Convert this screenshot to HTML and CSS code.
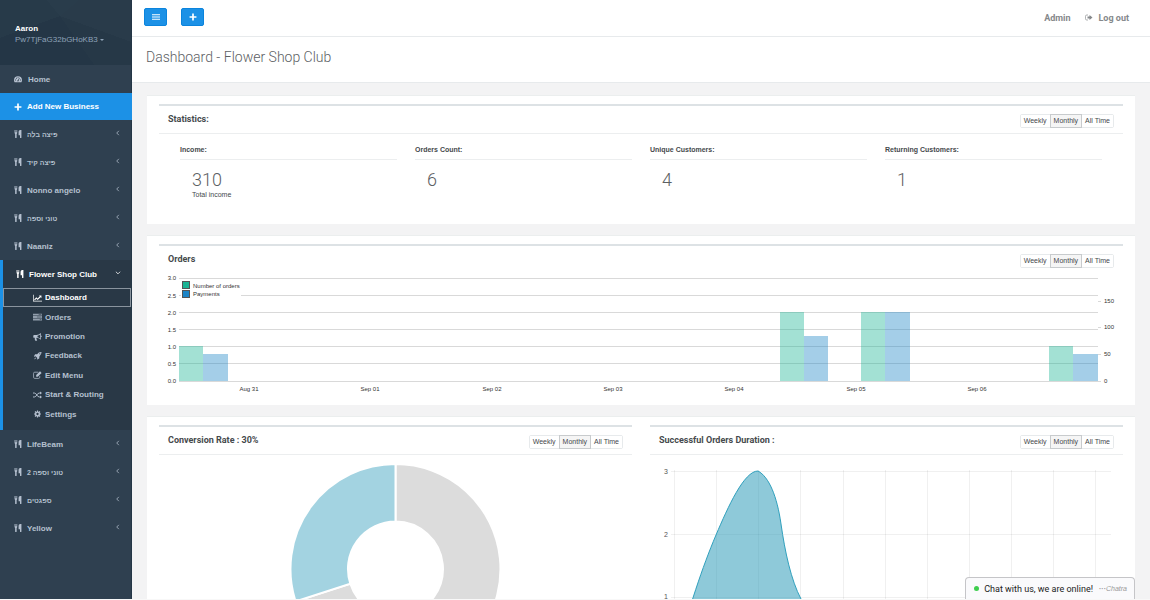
FILE: index.html
```html
<!DOCTYPE html>
<html lang="en">
<head>
    <meta charset="UTF-8">
    <meta name="viewport" content="width=device-width, initial-scale=1.0">
    <title>Dashboard - Flower Shop Club</title>
    <link rel="stylesheet" href="styles.css">
</head>
<body>
    <!-- Icon set -->
    <svg class="sprite" aria-hidden="true">
        <symbol id="i-food" viewBox="0 0 14 14"><path d="M1 0h1v4h.8V0h1v4h.8V0h1v5c0 1-.5 1.500-1 1.800V13q0 1-1.300 1T2 13V6.800C1.400 6.500 1 6 1 5zM13 0v13q0 1-1.300 1t-1.200-1V9H8V3q0-3 3-3z"/></symbol>
        <symbol id="i-home" viewBox="0 0 14 14"><path fill-rule="evenodd" d="M7 2a7 7 0 0 1 7 7q0 2-1 3.500H1Q0 11 0 9a7 7 0 0 1 7-7zM7 3.300v1.600M2 8h1.500v1.700H2zm1.500-3H5v1.700H3.500zM9 4.700l1 .5-1.800 4.200q.5 1.800-1.200 1.900-1.500-.3-1.200-1.800.5-.9 1.400-.8zM10.500 8H12v1.700h-1.500zM6.300 3.500h1.500V5H6.300z"/></symbol>
        <symbol id="i-plus" viewBox="0 0 14 14"><path d="M5.500 1h3v4.500H13v3H8.500V13h-3V8.500H1v-3h4.500z"/></symbol>
        <symbol id="i-bars" viewBox="0 0 14 14"><path d="M0 2h14v2H0zM0 6h14v2H0zM0 10h14v2H0z"/></symbol>
        <symbol id="i-left" viewBox="0 0 14 14"><path d="M9 2L4 7l5 5" fill="none" stroke="currentColor" stroke-width="1.800"/></symbol>
        <symbol id="i-down" viewBox="0 0 14 14"><path d="M2 4l5 5 5-5" fill="none" stroke="currentColor" stroke-width="1.800"/></symbol>
        <symbol id="i-chart" viewBox="0 0 16 14"><path d="M0 1h1.200v11H16v1.200H0zM2 9.500l4-4L8.200 7.700 12 4 10.500 2.500H15V7l-1.500-1.500-5.300 5.200L6 8.500 3.500 11z"/></symbol>
        <symbol id="i-list" viewBox="0 0 16 14"><path d="M0 1h16v3.200H0zM0 5.400h16v3.200H0zM0 9.800h16V13H0z" opacity=".75"/><path d="M10 2.600h5M7 7h8M12 11.400h3" stroke="#293846"/></symbol>
        <symbol id="i-horn" viewBox="0 0 16 14"><path fill-rule="evenodd" d="M14 0v4.500q1.500.5 1.500 1.500T14 7.500V12q-4-3.500-7.500-3.500-1.300 1 .2 2.200-.5 1 .8 2-1.500 1.500-3.700.5-1-2.500-.5-4.700H2Q.5 8.500.5 7V5Q.5 3.500 2 3.500h4.500Q10 3.500 14 0zm-1.200 2.500Q10.500 4.300 8 4.600v2.800q2.500.3 4.800 2.100z"/></symbol>
        <symbol id="i-rocket" viewBox="0 0 14 14"><path fill-rule="evenodd" d="M14 0q.2 4.500-3.700 7.700L10 11.200l-3.500 2-.5-.5.7-2.300-3-3-2.300.7-.6-.5 2-3.500 3.500-.3Q9.500-.2 14 0zm-3 2a1 1 0 1 0 .1 2 1 1 0 0 0-.1-2zM3 9.500l1.500 1.500L1 13z"/></symbol>
        <symbol id="i-edit" viewBox="0 0 16 14"><path d="M9.500 2H3Q1 2 1 4v7q0 2 2 2h7q2 0 2-2V9" fill="none" stroke="currentColor" stroke-width="1.300"/><path d="M12.500.5l2.800 2.800L8.500 10H5.700V7.200z"/></symbol>
        <symbol id="i-random" viewBox="0 0 16 14"><path d="M0 3.500h2.500C6.500 3.500 7 10.500 11 10.500h2M0 10.500h2.500C6.500 10.500 7 3.500 11 3.500h2" fill="none" stroke="currentColor" stroke-width="1.700"/><path d="M12.500.8L16 3.500l-3.500 2.700zM12.500 7.800l3.500 2.700-3.500 2.700z"/></symbol>
        <symbol id="i-cog" viewBox="0 0 16 16"><circle cx="8" cy="8" r="3.700" fill="none" stroke="currentColor" stroke-width="2.800"/><path d="M8 1v3M8 12v3M1 8h3M12 8h3M3 3l2 2M11 11l2 2M3 13l2-2M11 5l2-2" stroke="currentColor" stroke-width="2.300"/></symbol>
        <symbol id="i-out" viewBox="0 0 16 14"><path d="M6 2H3.500Q1 2 1 4.500v5Q1 12 3.500 12H6" fill="none" stroke="currentColor" stroke-width="1.300"/><path d="M9 2l6 5-6 5V9H5V5h4z"/></symbol>
    </svg>

    <div class="wrapper">
        <nav class="sidebar">
            <div class="profile">
                <strong>Aaron</strong>
                <a href="#">Pw7TjFaG32bGHoKB3 <span class="caret"></span></a>
            </div>
            <ul class="menu">
                <li><a href="#"><svg class="icon"><use href="#i-home"/></svg><span class="home">Home</span></a></li>
                <li class="add"><a href="#"><svg class="icon"><use href="#i-plus"/></svg>Add New Business</a></li>
                <li><a href="#"><svg class="icon"><use href="#i-food"/></svg><span class="he" dir="rtl">פיצה בלה</span><svg class="arrow"><use href="#i-left"/></svg></a></li>
                <li><a href="#"><svg class="icon"><use href="#i-food"/></svg><span class="he" dir="rtl">פיצה קיד</span><svg class="arrow"><use href="#i-left"/></svg></a></li>
                <li><a href="#"><svg class="icon"><use href="#i-food"/></svg>Nonno angelo<svg class="arrow"><use href="#i-left"/></svg></a></li>
                <li><a href="#"><svg class="icon"><use href="#i-food"/></svg><span class="he" dir="rtl">טוני וספה</span><svg class="arrow"><use href="#i-left"/></svg></a></li>
                <li><a href="#"><svg class="icon"><use href="#i-food"/></svg>Naaniz<svg class="arrow"><use href="#i-left"/></svg></a></li>
                <li class="active">
                    <a href="#"><svg class="icon"><use href="#i-food"/></svg>Flower Shop Club<svg class="arrow"><use href="#i-down"/></svg></a>
                    <ul class="submenu">
                        <li class="current"><a href="#"><svg class="icon"><use href="#i-chart"/></svg>Dashboard</a></li>
                        <li><a href="#"><svg class="icon"><use href="#i-list"/></svg>Orders</a></li>
                        <li><a href="#"><svg class="icon"><use href="#i-horn"/></svg>Promotion</a></li>
                        <li><a href="#"><svg class="icon"><use href="#i-rocket"/></svg>Feedback</a></li>
                        <li><a href="#"><svg class="icon"><use href="#i-edit"/></svg>Edit Menu</a></li>
                        <li><a href="#"><svg class="icon"><use href="#i-random"/></svg>Start &amp; Routing</a></li>
                        <li><a href="#"><svg class="icon"><use href="#i-cog"/></svg>Settings</a></li>
                    </ul>
                </li>
                <li><a href="#"><svg class="icon"><use href="#i-food"/></svg>LifeBeam<svg class="arrow"><use href="#i-left"/></svg></a></li>
                <li><a href="#"><svg class="icon"><use href="#i-food"/></svg><span class="he" dir="rtl">טוני וספה 2</span><svg class="arrow"><use href="#i-left"/></svg></a></li>
                <li><a href="#"><svg class="icon"><use href="#i-food"/></svg><span class="he" dir="rtl">ספגטים</span><svg class="arrow"><use href="#i-left"/></svg></a></li>
                <li><a href="#"><svg class="icon"><use href="#i-food"/></svg>Yellow<svg class="arrow"><use href="#i-left"/></svg></a></li>
            </ul>
        </nav>

        <div class="page">
            <header class="topbar">
                <button class="btn" type="button" aria-label="Toggle menu"><svg><use href="#i-bars"/></svg></button>
                <button class="btn" type="button" aria-label="Add"><svg><use href="#i-plus"/></svg></button>
                <div class="user-links">
                    <a href="#">Admin</a>
                    <a href="#"><svg><use href="#i-out"/></svg>Log out</a>
                </div>
            </header>
            <div class="heading">
                <h1>Dashboard - Flower Shop Club</h1>
            </div>

            <main class="content">
                <section class="panel statistics">
                    <div class="box">
                        <div class="box-title">
                            <h2>Statistics:</h2>
                            <div class="range"><button type="button">Weekly</button><button type="button" class="on">Monthly</button><button type="button">All Time</button></div>
                        </div>
                        <div class="stats">
                            <div class="stat"><h3>Income:</h3><p class="number">310</p><p class="note">Total income</p></div>
                            <div class="stat"><h3>Orders Count:</h3><p class="number">6</p></div>
                            <div class="stat"><h3>Unique Customers:</h3><p class="number">4</p></div>
                            <div class="stat"><h3>Returning Customers:</h3><p class="number">1</p></div>
                        </div>
                    </div>
                </section>

                <section class="panel orders">
                    <div class="box">
                        <div class="box-title plain">
                            <h2>Orders</h2>
                            <div class="range"><button type="button">Weekly</button><button type="button" class="on">Monthly</button><button type="button">All Time</button></div>
                        </div>
                        <svg class="chart" viewBox="159 273 964 124" role="img" aria-label="Orders and payments per day">
                            <g class="grid-dark">
                                <path d="M179 278.500H1098M179 295.500H1098M179 312.500H1098M179 329.500H1098M179 346.500H1098M179 363.500H1098M179 381.500H1098"/>
                                <path d="M1098 301.500h3M1098 327.500h3M1098 354.500h3M1098 381.500h3"/>
                            </g>
                            <g class="bar-orders">
                                <rect x="179" y="346" width="24" height="35"/>
                                <rect x="780" y="312" width="24" height="69"/>
                                <rect x="861" y="312" width="24" height="69"/>
                                <rect x="1049" y="346" width="24" height="35"/>
                            </g>
                            <g class="bar-payments">
                                <rect x="203" y="354" width="25" height="27"/>
                                <rect x="804" y="336" width="24" height="45"/>
                                <rect x="885" y="312" width="25" height="69"/>
                                <rect x="1073" y="354" width="25" height="27"/>
                            </g>
                            <rect x="181" y="281" width="60" height="17" fill="#fff"/>
                            <g stroke="#555">
                                <rect x="182.500" y="281.500" width="7" height="7" fill="#1ab394"/>
                                <rect x="182.500" y="290.500" width="7" height="7" fill="#1c84c6"/>
                            </g>
                            <g class="label">
                                <text x="193" y="288">Number of orders</text>
                                <text x="193" y="296">Payments</text>
                                <g text-anchor="end">
                                    <text x="176" y="280">3.0</text><text x="176" y="298">2.5</text>
                                    <text x="176" y="315">2.0</text><text x="176" y="332">1.5</text>
                                    <text x="176" y="349">1.0</text><text x="176" y="366">0.5</text>
                                    <text x="176" y="383">0.0</text>
                                </g>
                                <text x="1104" y="303">150</text><text x="1104" y="329">100</text>
                                <text x="1104" y="356">50</text><text x="1104" y="383">0</text>
                                <g text-anchor="middle">
                                    <text x="249" y="391">Aug 31</text><text x="370" y="391">Sep 01</text>
                                    <text x="492" y="391">Sep 02</text><text x="613" y="391">Sep 03</text>
                                    <text x="734" y="391">Sep 04</text><text x="856" y="391">Sep 05</text>
                                    <text x="977" y="391">Sep 06</text>
                                </g>
                            </g>
                        </svg>
                    </div>
                </section>

                <section class="panel split">
                    <div class="box">
                        <div class="box-title">
                            <h2>Conversion Rate : 30%</h2>
                            <div class="range"><button type="button">Weekly</button><button type="button" class="on">Monthly</button><button type="button">All Time</button></div>
                        </div>
                        <svg class="chart" viewBox="159 455 473 225" role="img" aria-label="Conversion rate 30%">
                            <g stroke="#fff" stroke-width="2">
                                <path fill="#dcdcdc" d="M395.500 464A105 105 0 1 1 295.600 601.400L350.300 583.700A47.500 47.500 0 1 0 395.500 521.500z"/>
                                <path fill="#a3d3e1" d="M395.500 464A105 105 0 0 0 295.600 601.400L350.300 583.700A47.500 47.500 0 0 1 395.500 521.500z"/>
                            </g>
                        </svg>
                    </div>
                    <div class="box">
                        <div class="box-title">
                            <h2>Successful Orders Duration :</h2>
                            <div class="range"><button type="button">Weekly</button><button type="button" class="on">Monthly</button><button type="button">All Time</button></div>
                        </div>
                        <svg class="chart" viewBox="650 455 473 225" role="img" aria-label="Successful orders duration">
                            <path class="grid-light" d="M671 471.500H1111M671 534.500H1111M671 597.500H1111M674.500 470V661M716.500 470V661M758.500 470V661M800.500 470V661M843.500 470V661M885.500 470V661M927.500 470V661M969.500 470V661M1011.500 470V661M1053.500 470V661M1095.500 470V661"/>
                            <path class="area" d="M674 661C690 605 702 568 716 535C728 507 744 471 758 471C769 477 777 496 781 524C785 552 791 580 801 599C812 628 828 661 843 661z"/>
                            <g class="axis" text-anchor="end">
                                <text x="668" y="474">3</text><text x="668" y="537">2</text><text x="668" y="599">1</text>
                            </g>
                        </svg>
                    </div>
                </section>
            </main>
        </div>
    </div>

    <button class="chat" type="button"><span class="dot"></span>Chat with us, we are online!<span class="brand"><b>···</b><i>Chatra</i></span></button>
</body>
</html>
```
FILE: styles.css
```css
/* Base */
* {
    box-sizing: border-box;
}

body {
    margin: 0;
    height: 100vh;
    overflow: hidden;
    font-family: "Liberation Sans", Arial, sans-serif;
    font-size: 8px;
    color: #45494c;
    background: #f3f3f4;
}

h1, h2, h3, p, ul {
    margin: 0;
    padding: 0;
}

a {
    color: inherit;
    text-decoration: none;
}

button {
    font-family: inherit;
    cursor: pointer;
}

svg {
    fill: currentColor;
}

.sprite {
    display: none;
}

.wrapper {
    display: flex;
    height: 100vh;
    overflow: hidden;
    border-bottom: 1px solid #f8f8f8;
}

/* Sidebar */
.sidebar {
    flex: 0 0 132px;
    background: #2f4050;
    border-right: 1px solid #243646;
    color: #b5c0cf;
    font-weight: bold;
}

.profile {
    height: 65px;
    padding: 23px 15px 0;
    line-height: 11px;
    background: conic-gradient(from 50deg at 60px 16px, #293b4a 0 60deg, #263847 60deg 95deg, #243646 95deg 200deg, #273a49 200deg 270deg, #293c4b 270deg);
}

.profile strong {
    display: block;
    color: #fff;
}

.profile a {
    display: block;
    font-weight: normal;
    color: #8fa3b8;
}

.caret {
    display: inline-block;
    vertical-align: middle;
    border: 2px solid transparent;
    border-top-color: currentColor;
    border-bottom: 0;
}

.menu, .submenu {
    list-style: none;
}

.menu > li > a {
    display: flex;
    align-items: center;
    height: 28px;
    padding: 0 10px 0 14px;
}

.icon {
    width: 8px;
    height: 8px;
    margin-right: 5px;
}

.home {
    margin-left: 1px;
}

.he {
    font-size: 7px;
}

.arrow {
    width: 6px;
    height: 6px;
    margin: 0 0 3px auto;
}

.menu > .add > a {
    height: 27px;
    margin-right: -1px;
    background: #1c91e6;
    color: #fff;
}

.menu > .active {
    border-left: 3px solid #1c91e6;
    background: #293846;
}

.menu > .active > a {
    padding-left: 13px;
    color: #fff;
}

.submenu {
    display: flex;
    flex-direction: column;
    min-height: 142px;
    padding-bottom: 6px;
}

.submenu li {
    flex: 1;
    display: flex;
}

.submenu a {
    flex: 1;
    display: flex;
    align-items: center;
    padding-left: 30px;
}

.submenu .icon {
    width: 9px;
    margin-right: 3px;
}

.submenu .current a {
    color: #fff;
    outline: 1px solid #8a949e;
    outline-offset: -1px;
}

/* Top bar and heading */
.page {
    flex: 1;
    min-width: 0;
}

.topbar {
    display: flex;
    align-items: center;
    gap: 14px;
    height: 37px;
    padding: 0 21px 2px 12px;
    background: #fff;
    border-bottom: 1px solid #e7eaec;
}

.btn {
    display: flex;
    align-items: center;
    justify-content: center;
    width: 23px;
    height: 18px;
    padding: 0;
    border: 1px solid #0b84dd;
    border-radius: 2px;
    background: #1c91e6;
    color: #fff;
}

.btn svg {
    width: 8px;
    height: 8px;
}

.user-links {
    display: flex;
    gap: 14px;
    margin-left: auto;
    padding-top: 2px;
    font-family: Roboto, sans-serif;
    font-size: 9px;
    font-weight: bold;
    color: #85888b;
}

.user-links svg {
    width: 8px;
    height: 7px;
    margin-right: 6px;
}

.heading {
    height: 46px;
    padding: 10px 14px;
    background: #fff;
    border-bottom: 1px solid #e7eaec;
}

.heading h1 {
    font-family: Roboto, sans-serif;
    font-size: 14px;
    font-weight: 300;
    line-height: 20px;
    color: #5c6063;
}

/* Panels */
.content {
    display: grid;
    gap: 11px;
    padding: 12px 15px;
}

.panel {
    padding: 8px 12px;
    background: #fff;
    border-top: 1px solid #ebeeee;
}

.split {
    display: grid;
    grid-template-columns: 1fr 1fr;
    gap: 18px;
}

.box {
    border-top: 2px solid #dde2e5;
}

.box-title {
    display: flex;
    justify-content: space-between;
    align-items: flex-start;
    height: 28px;
    padding: 7px 9px 0;
    border-bottom: 1px solid #eceeef;
}

.box-title.plain {
    height: 27px;
    border-bottom: 0;
}

.box-title h2 {
    font-family: Roboto, sans-serif;
    font-size: 9px;
    line-height: 12px;
}

.range {
    display: flex;
    gap: 1px;
    margin-top: 1px;
    border: 1px solid #e7eaec;
    border-radius: 2px;
}

.range button {
    height: 12px;
    padding: 0 3px;
    border: 0;
    background: #fff;
    color: #45494c;
    font-size: 7px;
    line-height: 12px;
}

.range .on {
    background: #f5f5f5;
    outline: 1px solid #c8cbcd;
}

/* Statistics */
.statistics {
    min-height: 129px;
}

.stats {
    display: grid;
    grid-template-columns: repeat(4, 1fr);
    gap: 18px;
    padding: 11px 21px 0;
}

.stat h3 {
    padding-bottom: 4px;
    border-bottom: 1px solid #eceeef;
    font-size: 7px;
    line-height: 10px;
}

.number {
    margin-top: 8px;
    padding-left: 12px;
    font-family: Roboto, sans-serif;
    font-size: 18px;
    font-weight: 300;
    line-height: 23px;
    color: #5c6063;
}

.note {
    padding-left: 12px;
    font-size: 7px;
    line-height: 8px;
}

/* Charts */
.chart {
    display: block;
    width: 100%;
    height: auto;
}

.grid-dark {
    fill: none;
    stroke: #d9d9d9;
}

.bar-orders {
    fill: #1ab394;
    fill-opacity: .4;
}

.bar-payments {
    fill: #1c84c6;
    fill-opacity: .4;
}

.label {
    font-size: 6px;
    fill: #333;
}

.grid-light {
    fill: none;
    stroke: #000;
    stroke-opacity: .06;
}

.area {
    fill: #1d93b3;
    fill-opacity: .5;
    stroke: #30a0bd;
}

.axis {
    font-size: 7px;
    fill: #555;
}

/* Chat widget */
.chat {
    position: fixed;
    right: 15px;
    bottom: 1px;
    display: flex;
    align-items: center;
    height: 22px;
    padding: 0 7px 0 8px;
    border: 1px solid #c5c5c8;
    border-bottom: 0;
    border-radius: 4px 4px 0 0;
    background: #fafafc;
    color: #222;
    font-family: Roboto, sans-serif;
    font-size: 9px;
}

.dot {
    width: 5px;
    height: 5px;
    margin-right: 5px;
    border-radius: 50%;
    background: #3fce4f;
}

.brand {
    margin-left: 6px;
    font-family: "Liberation Sans", Arial, sans-serif;
    font-size: 7px;
    color: #999;
}
```
